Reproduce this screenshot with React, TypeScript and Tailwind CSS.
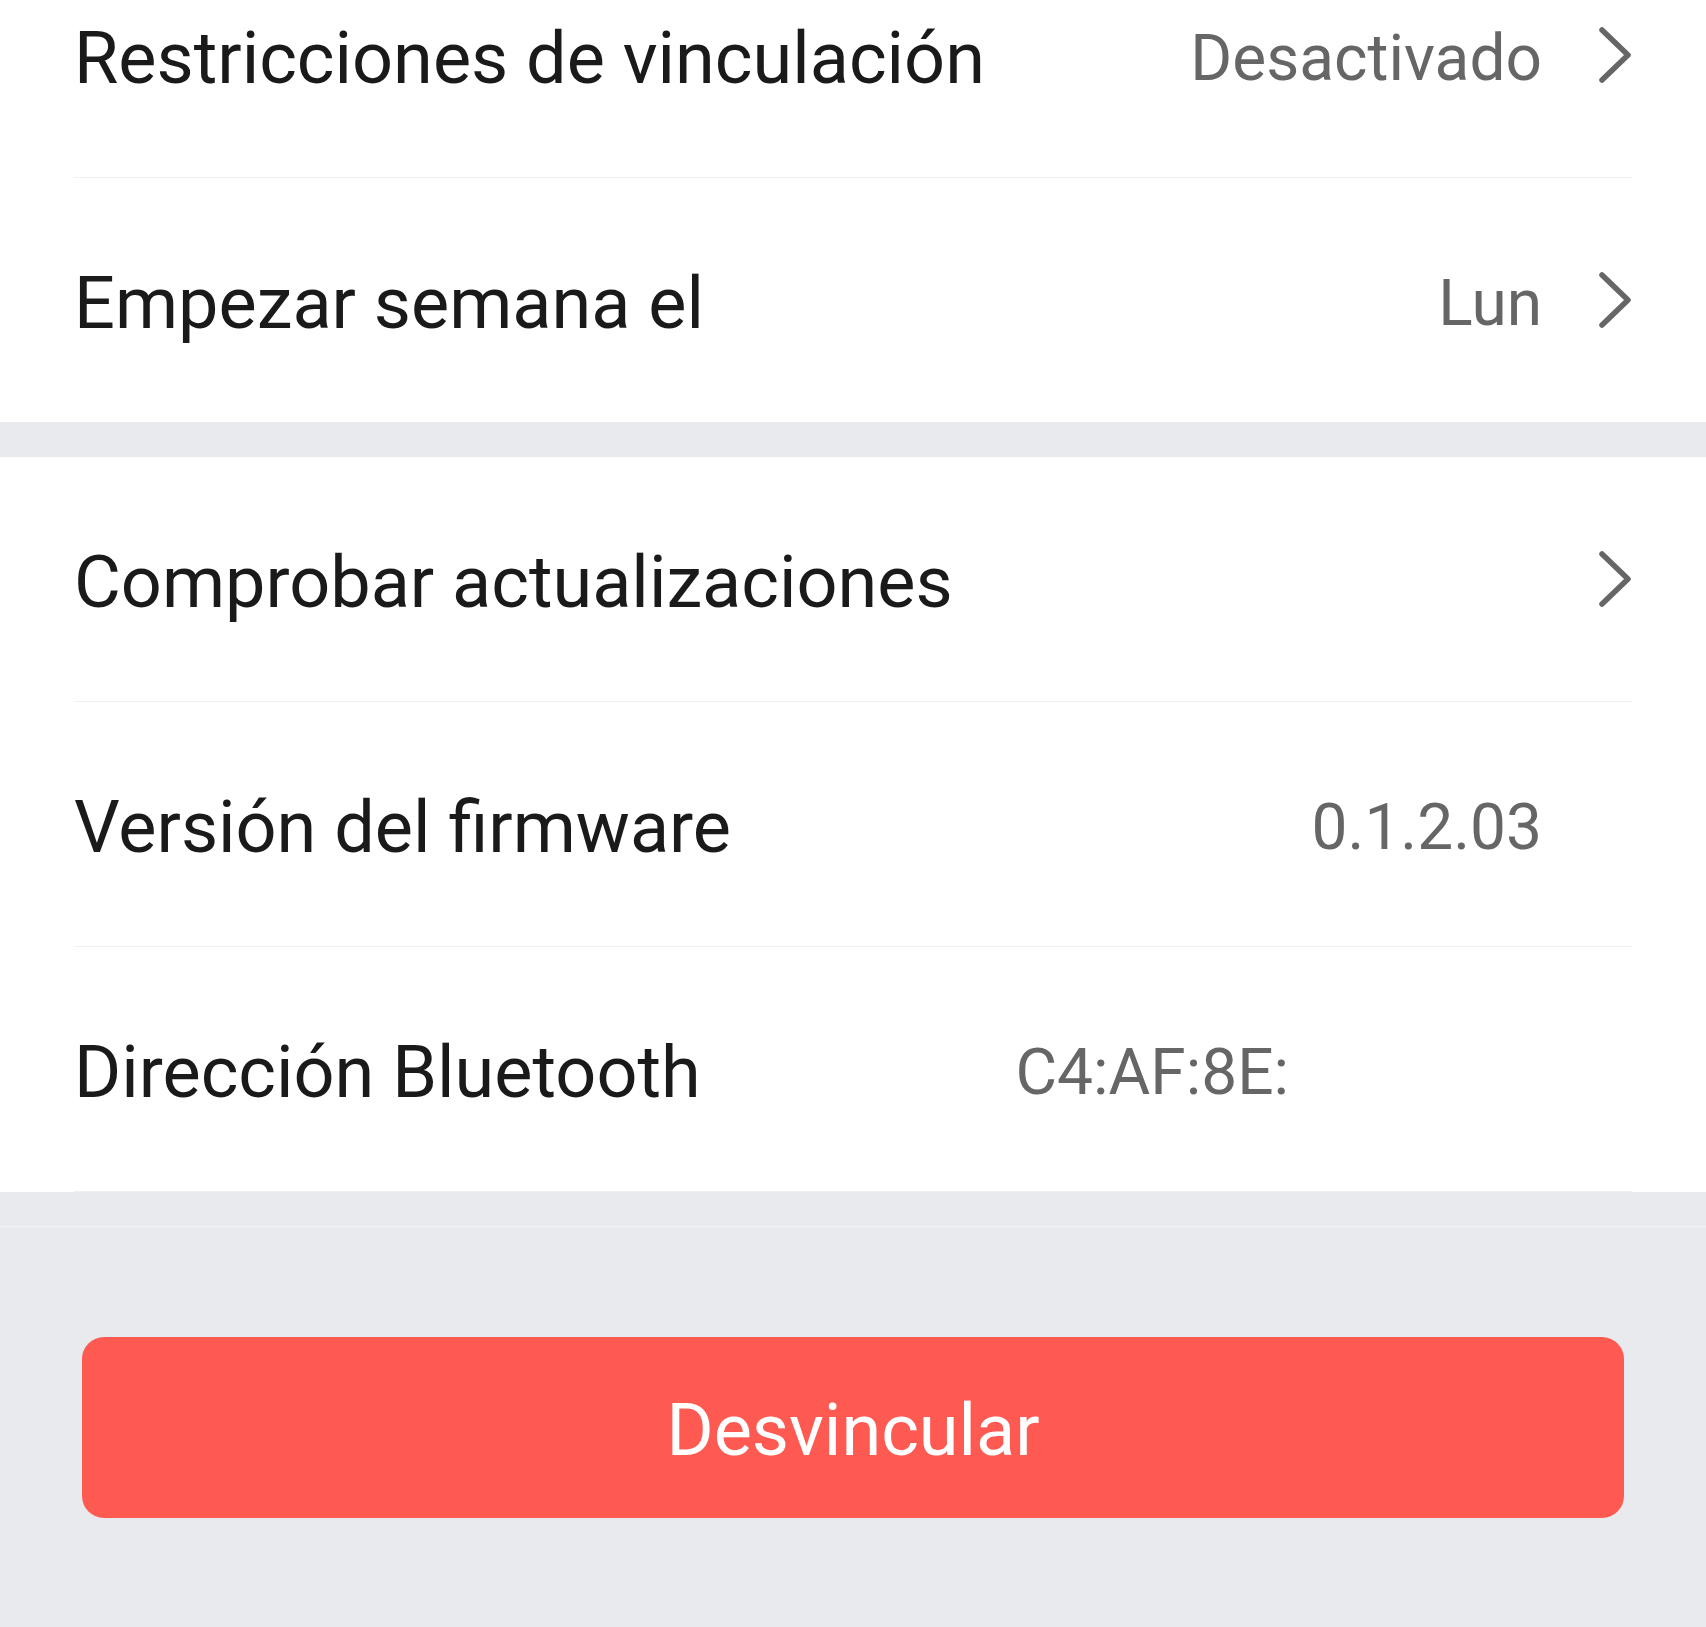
import React from "react";

function Chevron() {
  return (
    <svg width="34" height="58" viewBox="0 0 34 58" fill="none" className="shrink-0">
      <path d="M4 4 L30 29 L4 54" stroke="#666666" strokeWidth="5.5" strokeLinecap="round" strokeLinejoin="round" />
    </svg>
  );
}

function Row({ label, value, chevron, valueClass }: { label: string; value?: string; chevron?: boolean; valueClass?: string }) {
  return (
    <div className="flex h-[244px] items-center pl-[74px] pr-[74px]">
      <div className="flex-1 text-[72px] leading-none text-[#1a1a1a] pt-[8px]">{label}</div>
      {value && <div className={"text-[64px] leading-none text-[#666666] pt-[8px] " + (valueClass ?? "")}>{value}</div>}
      <div className="ml-[56px] flex w-[34px] justify-end">{chevron && <Chevron />}</div>
    </div>
  );
}

function Sep() {
  return <div className="mx-[74px] h-px bg-[#f0f0f0]" />;
}

export default function App() {
  return (
    <div className="min-h-[1627px] h-[1627px] overflow-hidden bg-[#e9eaed]" style={{ fontFamily: "Roboto, 'Noto Sans', sans-serif" }}>
      <div className="-mt-[67px] bg-white">
        <Row label="Restricciones de vinculación" value="Desactivado" chevron />
        <Sep />
        <Row label="Empezar semana el" value="Lun" chevron />
      </div>
      <div className="h-[35px]" />
      <div className="bg-white">
        <Row label="Comprobar actualizaciones" chevron />
        <Sep />
        <Row label="Versión del firmware" value="0.1.2.03" />
        <Sep />
        <Row label="Dirección Bluetooth" value="C4:AF:8E:" valueClass="mr-[253px]" />
        <Sep />
      </div>
      <div className="h-[35px] border-b border-[#f1f2f4]" />
      <div className="px-[82px] pt-[110px]">
        <button className="flex h-[181px] w-full items-center justify-center rounded-[22px] bg-[#ff5a52] text-[72px] leading-none text-white pt-[6px]">
          Desvincular
        </button>
      </div>
    </div>
  );
}
